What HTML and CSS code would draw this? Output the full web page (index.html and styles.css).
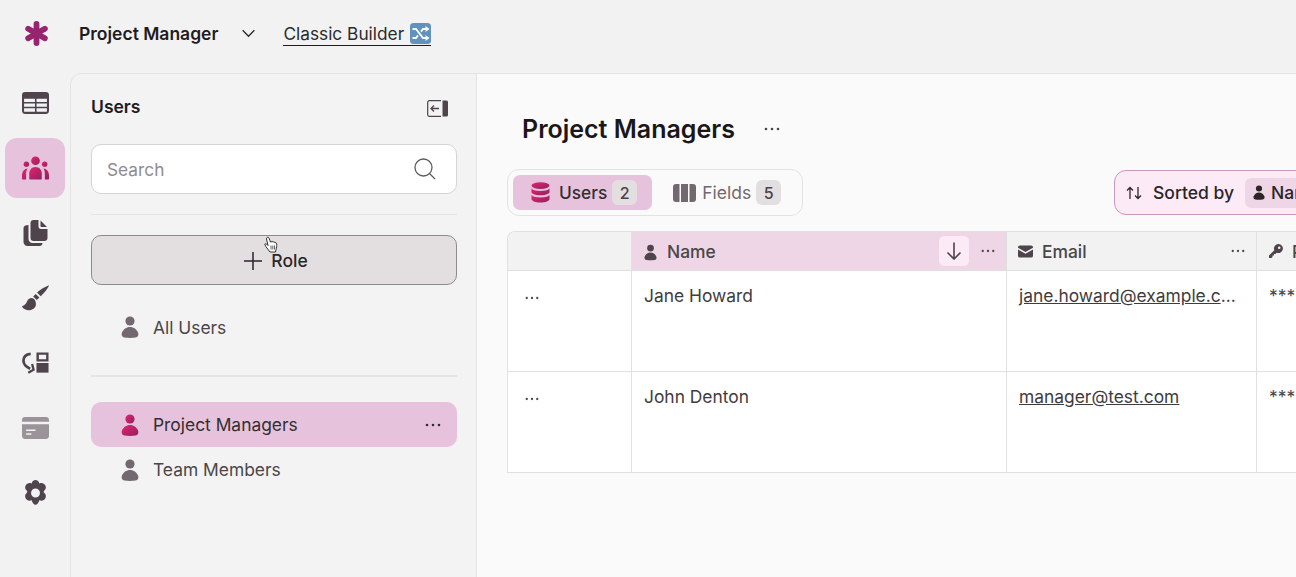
FILE: index.html
```html
<!DOCTYPE html>
<html lang="en">
<head>
    <meta charset="UTF-8">
    <title>Project Manager - Users</title>
    <link rel="stylesheet" href="styles.css">
</head>
<body>

<svg class="defs" width="0" height="0">
    <defs>
        <linearGradient id="pink" x1="0" y1="0" x2="1" y2="1">
            <stop offset="0" stop-color="#e5246f"/>
            <stop offset="1" stop-color="#8f2160"/>
        </linearGradient>
        <symbol id="person" viewBox="0 0 18 22">
            <circle cx="9" cy="5" r="4.6"/>
            <path d="M9 11c-4 0-6.300 2.300-8 5.500C.2 18.500.6 21 3.500 21.500c3.500.5 7.500.5 11 0 2.900-.5 3.300-3 2.500-5C15.300 13.300 13 11 9 11z"/>
        </symbol>
        <symbol id="dots" viewBox="0 0 16 4">
            <circle cx="2" cy="2" r="1.300"/>
            <circle cx="8" cy="2" r="1.300"/>
            <circle cx="14" cy="2" r="1.300"/>
        </symbol>
    </defs>
</svg>

<header class="topbar">
    <svg class="logo" viewBox="0 0 26 26">
        <g fill="#97246f">
            <rect x="10" y="0" width="6" height="26" rx="3"/>
            <rect x="10" y="0" width="6" height="26" rx="3" transform="rotate(60 13 13)"/>
            <rect x="10" y="0" width="6" height="26" rx="3" transform="rotate(120 13 13)"/>
        </g>
    </svg>
    <span class="app-name">Project Manager</span>
    <svg class="chevron" viewBox="0 0 16 10"><path d="M1.500 1.500 8 8l6.500-6.500" fill="none" stroke="#2b2b2b" stroke-width="1.500"/></svg>
    <a class="builder-link">Classic Builder
        <svg class="shuffle" viewBox="0 0 21 21">
            <rect width="21" height="21" rx="3.500" fill="#5f93bd"/>
            <path d="M2.500 6h3.500l7 9h3M2.500 15h3.500l2-2.600M11 8.600 13 6h3" fill="none" stroke="#fff" stroke-width="1.800"/>
            <path d="M15.500 3 19.500 6l-4 3zM15.500 12l4 3-4 3z" fill="#fff"/>
        </svg>
    </a>
</header>

<div class="workspace">
    <nav class="rail">
        <a class="rail-item">
            <svg viewBox="0 0 26 21"><path fill="#4f444c" fill-rule="evenodd" d="M3 0h20a3 3 0 0 1 3 3v15a3 3 0 0 1-3 3H3a3 3 0 0 1-3-3V3a3 3 0 0 1 3-3zM2 6.500V9.500h10.500v-3zm12 0V9.500h10v-3zM2 11v3h10.500v-3zm12 0v3h10v-3zM2 15.500V18.500q0 .5.5.5h10v-3.500zm12 0V19h9.500q.5 0 .5-.5v-3z"/></svg>
        </a>
        <a class="rail-item active">
            <svg viewBox="0 0 28 24" fill="url(#pink)">
                <circle cx="14" cy="4.500" r="4.500"/>
                <circle cx="4.500" cy="8" r="2.800"/>
                <circle cx="23.500" cy="8" r="2.800"/>
                <path d="M14 11c-4 0-6.500 3-6.500 7v5.500c0 .3.200.5.5.5h12c.3 0 .5-.2.5-.5V18c0-4-2.500-7-6.500-7z"/>
                <path d="M5.800 12.500C2.500 12.500 0 15.500 0 20v3.500c0 .3.200.5.5.5h3.800V18c0-2 .5-4 1.500-5.500zM22.200 12.500c3.300 0 5.800 3 5.800 7.500v3.500c0 .3-.2.5-.5.5h-3.800V18c0-2-.5-4-1.500-5.500z"/>
            </svg>
        </a>
        <a class="rail-item">
            <svg viewBox="0 0 24 26" fill="#4f444c">
                <path d="M10 0h5v6.500c0 1.400 1.100 2.500 2.500 2.500H24v9c0 1.700-1.300 3-3 3H10c-1.700 0-3-1.300-3-3V3c0-1.700 1.300-3 3-3z"/>
                <path d="M17 .5 23.500 7H18c-.6 0-1-.4-1-1z"/>
                <path d="M5 5v14c0 2.200 1.800 4 4 4h10c0 1.700-1.300 3-3 3H4c-2.200 0-4-1.800-4-4V8c0-1.700 2-3 5-3z"/>
            </svg>
        </a>
        <a class="rail-item">
            <svg viewBox="0 0 27 26" fill="#4f444c">
                <path d="M26.500.5c-3.500 1.300-8 3.800-11.500 7l3.700 3.700c3.400-3 6.500-7 8.200-10.200.2-.4-.1-.7-.4-.5z"/>
                <path d="M13.700 8.900l-2.500 2.700 3.500 3.500 2.700-2.500z"/>
                <path d="M9.800 13c-2 0-3.800 1.200-4.600 3-.8 1.800-1.400 3.400-3.500 4.400-.9.400-1.700.7-1.700 1.300 2 3 6 4.300 9.500 3 3-1.100 5-3.500 4.300-7-.3-2.500-1.700-4.700-4-4.700z"/>
            </svg>
        </a>
        <a class="rail-item">
            <svg viewBox="0 0 28 22">
                <path d="M9 1.500C4 2 1.500 5 1.500 8.500S4 15 8.500 17" fill="none" stroke="#4f444c" stroke-width="2.800"/>
                <path d="M10.500 12 12 18l-5.500 3" fill="none" stroke="#4f444c" stroke-width="2.400"/>
                <path fill="#4f444c" fill-rule="evenodd" d="M15 0h12.500v9.500H15zM17.500 2.500v4.500h7.500V2.500z"/>
                <rect x="15" y="11" width="12.500" height="10" fill="#4f444c"/>
            </svg>
        </a>
        <a class="rail-item">
            <svg viewBox="0 0 26 21">
                <path fill="#9a9397" d="M3 0h20a3 3 0 0 1 3 3v1.500H0V3a3 3 0 0 1 3-3z"/>
                <path fill="#9a9397" fill-rule="evenodd" d="M0 7h26v11a3 3 0 0 1-3 3H3a3 3 0 0 1-3-3zM4 12v1.500h9V12zm0 3.500V17h5v-1.500z"/>
            </svg>
        </a>
        <a class="rail-item">
            <svg viewBox="0 0 24 25"><path fill="#4f444c" fill-rule="evenodd" d="M12 0c1.600 0 3 1 3.400 2.600l.2.700 1-.3c2-.5 4 .5 4.900 2.200.9 1.700.5 3.800-1 5l-.6.500.1 1.300.5.500c1.500 1.200 1.900 3.300 1 5-.9 1.800-2.900 2.700-4.900 2.200l-1-.3-.2.700c-.4 1.600-1.800 3.800-3.400 3.800s-3-2.200-3.400-3.800l-.2-.7-1 .3c-2 .5-4-.4-4.900-2.200-.9-1.700-.5-3.800 1-5l.5-.5V10.700l-.5-.5c-1.500-1.200-1.900-3.300-1-5C3.400 3.500 5.400 2.500 7.400 3l1 .3.2-.7C9 1 10.400 0 12 0zm0 8.200a4.300 4.300 0 1 0 0 8.600 4.300 4.300 0 0 0 0-8.600z"/></svg>
        </a>
    </nav>

    <aside class="sidebar">
        <div class="sidebar-head">
            <h2>Users</h2>
            <svg class="collapse" viewBox="0 0 21 17">
                <path d="M14 .7H2.200A1.500 1.500 0 0 0 .7 2.200v12.600a1.500 1.500 0 0 0 1.500 1.500H14" fill="none" stroke="#4f444c" stroke-width="1.200"/>
                <path d="M15.500 .5h4a1.500 1.500 0 0 1 1.500 1.500v13a1.500 1.500 0 0 1-1.500 1.500h-4z" fill="#4f444c"/>
                <path d="M12 8.500H4M7 5.500l-3 3 3 3" fill="none" stroke="#4f444c" stroke-width="1.300"/>
            </svg>
        </div>
        <div class="search">
            <span>Search</span>
            <svg viewBox="0 0 22 22"><circle cx="9.500" cy="9.500" r="8.500" fill="none" stroke="#5f5a5d" stroke-width="1.300"/><path d="m15.500 15.500 5.500 5.500" stroke="#5f5a5d" stroke-width="1.300"/></svg>
        </div>
        <hr class="divider thin">
        <button class="add-role">
            <svg viewBox="0 0 18 18"><path d="M9 0v18M0 9h18" stroke="#2b2528" stroke-width="1.500"/></svg>
            Role
        </button>
        <a class="role-row all"><svg><use href="#person"/></svg>All Users</a>
        <hr class="divider thick">
        <a class="role-row selected"><svg><use href="#person"/></svg>Project Managers<svg class="row-dots"><use href="#dots"/></svg></a>
        <a class="role-row"><svg><use href="#person"/></svg>Team Members</a>
    </aside>

    <main class="content">
        <div class="title-row">
            <h1>Project Managers</h1>
            <svg class="title-dots"><use href="#dots"/></svg>
        </div>
        <div class="toolbar">
            <div class="tabs">
                <a class="tab active">
                    <svg viewBox="0 0 19 21" fill="url(#pink)">
                        <ellipse cx="9.500" cy="3.600" rx="9" ry="3.400"/>
                        <path d="M.5 6.500c1.500 1.800 5 2.500 9 2.500s7.500-.7 9-2.500V10c0 1.800-4 3.300-9 3.300S.5 11.800.5 10z"/>
                        <path d="M.5 13c1.500 1.800 5 2.500 9 2.500s7.500-.7 9-2.500v4c0 1.900-4 3.500-9 3.500s-9-1.600-9-3.500z"/>
                    </svg>
                    Users <span class="count">2</span>
                </a>
                <a class="tab">
                    <svg viewBox="0 0 23 18" fill="#74686f">
                        <path d="M3 0h3.500v18H3a3 3 0 0 1-3-3V3a3 3 0 0 1 3-3z"/>
                        <rect x="8" width="7" height="18"/>
                        <path d="M16.500 0H20a3 3 0 0 1 3 3v12a3 3 0 0 1-3 3h-3.500z"/>
                    </svg>
                    Fields <span class="count">5</span>
                </a>
            </div>
            <div class="sort-pill">
                <svg viewBox="0 0 16 14"><path d="M4 13V1.500M1 4.500l3-3 3 3M12 1v11.500M9 9.500l3 3 3-3" fill="none" stroke="#2b2528" stroke-width="1.300"/></svg>
                <span>Sorted by</span>
                <span class="sort-chip"><svg><use href="#person"/></svg>Name</span>
            </div>
        </div>

        <div class="grid">
            <div class="cell head corner"></div>
            <div class="cell head sorted">
                <svg class="field-icon"><use href="#person"/></svg>
                <span class="head-label">Name</span>
                <span class="sort-btn"><svg viewBox="0 0 16 18"><path d="M8 .5v16M1.500 10.500 8 17l6.500-6.500" fill="none" stroke="#4f444c" stroke-width="1.600"/></svg></span>
                <svg class="head-dots"><use href="#dots"/></svg>
            </div>
            <div class="cell head">
                <svg class="field-icon mail" viewBox="0 0 16 13"><path fill="#4f444c" d="M2 0h12a2 2 0 0 1 2 2v.5L8 7 0 2.500V2a2 2 0 0 1 2-2zM0 4.300l8 4.500 8-4.500V11a2 2 0 0 1-2 2H2a2 2 0 0 1-2-2z"/></svg>
                <span class="head-label">Email</span>
                <svg class="head-dots"><use href="#dots"/></svg>
            </div>
            <div class="cell head">
                <svg class="field-icon key" viewBox="0 0 14 14"><path fill="#4f444c" fill-rule="evenodd" d="M9.500 0a4.500 4.500 0 1 1-1.700 8.700L6.500 10H5v1.500H3.500V13l-1 1H0v-2.500l5.300-5.300A4.500 4.500 0 0 1 9.500 0zm.7 2.500a1.300 1.300 0 1 0 0 2.600 1.300 1.300 0 0 0 0-2.600z"/></svg>
                <span class="head-label">Password</span>
            </div>

            <div class="cell row-menu"><svg><use href="#dots"/></svg></div>
            <div class="cell">Jane Howard</div>
            <div class="cell"><a class="mail-link">jane.howard@example.c</a>...</div>
            <div class="cell secret">*****</div>

            <div class="cell row-menu"><svg><use href="#dots"/></svg></div>
            <div class="cell">John Denton</div>
            <div class="cell"><a class="mail-link">manager@test.com</a></div>
            <div class="cell secret">*****</div>
        </div>
    </main>
</div>

<svg class="cursor" viewBox="0 0 14 17">
    <path d="M3 1c.8-.6 1.700-.2 2 .6L6.500 5.500l1.600-.4 1.500.3 1.500.5 1.300.8c.5 1 .5 3-.1 5l-.8 3.800H6L1.800 10 .8 7.800c.2-.7 1-.8 1.700-.3L4 9 2.500 2.500C2.400 2 2.600 1.300 3 1z" fill="#fff" stroke="#1d1d1d" stroke-width=".9"/>
    <path d="M7 9v4M8.800 9v4M10.500 9v4" stroke="#1d1d1d" stroke-width=".7"/>
</svg>

</body>
</html>
```

FILE: styles.css
```css
* {
    box-sizing: border-box;
}
html, body {
    margin: 0;
    height: 577px;
    overflow: hidden;
}
body {
    position: relative;
    font-family: Inter, 'Liberation Sans', sans-serif;
    background: #f2f2f2;
    color: #3c3a3b;
}
.defs {
    position: absolute;
}
h1, h2 {
    margin: 0;
}

/* top bar */
.topbar {
    height: 73px;
    display: flex;
    align-items: center;
    padding-left: 24px;
    padding-bottom: 6px;
}
.logo {
    width: 25px;
    height: 25px;
}
.app-name {
    margin-left: 30px;
    font-size: 17.500px;
    font-weight: 600;
    color: #1f1c1e;
}
.chevron {
    width: 15px;
    height: 9px;
    margin-left: 23px;
}
.builder-link {
    display: flex;
    align-items: center;
    gap: 6px;
    margin-left: 27px;
    font-size: 17.300px;
    color: #2b2b2b;
    border-bottom: 1px solid #1f1c1e;
    line-height: 23px;
    margin-top: 1px;
}
.shuffle {
    width: 21px;
    height: 21px;
}

.workspace {
    display: flex;
    height: 504px;
}

/* left icon rail */
.rail {
    width: 70px;
    flex: none;
    padding-left: 5px;
    display: flex;
    flex-direction: column;
    gap: 5px;
}
.rail-item {
    width: 60px;
    height: 60px;
    border-radius: 12px;
    display: flex;
    align-items: center;
    justify-content: center;
}
.rail-item svg {
    width: 27px;
    height: 26px;
}
.rail-item.active {
    background: #e7c2dc;
}

/* users sidebar */
.sidebar {
    width: 407px;
    flex: none;
    padding: 0 19px 0 20px;
    background: #f3f3f3;
    border-left: 1px solid #e4e4e4;
    border-top: 1px solid #e4e4e4;
    border-right: 1px solid #e4e4e4;
    border-top-left-radius: 12px;
}
.sidebar-head {
    height: 70px;
    display: flex;
    justify-content: space-between;
    align-items: center;
    padding-right: 9px;
    padding-bottom: 6px;
}
.sidebar-head h2 {
    font-size: 17.500px;
    font-weight: 600;
    color: #1f1c1e;
}
.collapse {
    width: 21px;
    height: 17px;
    margin-top: 4px;
}
.search {
    height: 50px;
    background: #fff;
    border: 1px solid #d6d3d5;
    border-radius: 10px;
    display: flex;
    align-items: center;
    justify-content: space-between;
    padding: 1px 20px 0 15px;
    font-size: 17.300px;
    color: #918b8f;
}
.search svg {
    width: 22px;
    height: 22px;
    margin-top: -1px;
}
.divider {
    border: none;
    margin: 0;
    background: #e4e4e4;
}
.divider.thin {
    height: 1px;
    margin: 20px 0;
}
.divider.thick {
    height: 2px;
    margin: 0 0 25px;
}
.add-role {
    width: 100%;
    height: 50px;
    display: flex;
    align-items: center;
    justify-content: center;
    gap: 9px;
    padding: 1px 0 0 4px;
    background: #e3dfe1;
    border: 1px solid #8f8a8d;
    border-radius: 10px;
    font-family: inherit;
    font-size: 17.500px;
    font-weight: 500;
    color: #2b2528;
}
.add-role svg {
    width: 18px;
    height: 18px;
}
.role-row {
    height: 45px;
    display: flex;
    align-items: center;
    padding-left: 30px;
    font-size: 17.400px;
    color: #4a4648;
    border-radius: 10px;
}
.role-row > svg:first-child {
    width: 18px;
    height: 22px;
    margin-right: 14px;
    fill: #74686f;
}
.role-row.all {
    height: 46px;
    margin: 19px 0 25px;
}
.role-row.selected {
    background: #e7c2dc;
    color: #332f31;
}
.role-row.selected > svg:first-child {
    fill: url(#pink);
}
.row-dots {
    width: 16px;
    height: 4px;
    margin-left: auto;
    margin-right: 16px;
    fill: #332c31;
}

/* main panel */
.content {
    flex: 1;
    min-width: 0;
    overflow: hidden;
    background: #fafafa;
    border-top: 1px solid #e4e4e4;
    padding-left: 30px;
}
.title-row {
    height: 95px;
    display: flex;
    align-items: center;
    padding-left: 15px;
    padding-top: 15px;
}
.title-row h1 {
    font-size: 25px;
    font-weight: 600;
    color: #1a1719;
}
.title-dots {
    width: 16px;
    height: 4px;
    margin-left: 29px;
    fill: #4f444c;
}
.toolbar {
    display: flex;
    align-items: flex-start;
    gap: 311px;
    width: 900px;
}
.tabs {
    flex: none;
    width: 296px;
    height: 47px;
    padding: 5px;
    display: flex;
    gap: 6px;
    border: 1px solid #e3e3e3;
    border-radius: 12px;
}
.tab {
    height: 35px;
    display: flex;
    align-items: center;
    padding: 0 15px;
    font-size: 17.500px;
    color: #74686f;
    border-radius: 7px;
}
.tab svg {
    width: 23px;
    height: 18px;
    margin-right: 6px;
}
.tab.active {
    background: #e7c2dc;
    color: #332f31;
    font-weight: 500;
    font-size: 17.300px;
}
.tab.active svg {
    width: 19px;
    height: 21px;
    margin-left: 3px;
    margin-right: 9px;
}
.count {
    width: 25px;
    height: 25px;
    margin-left: 5px;
    border-radius: 6px;
    background: #e3dfe1;
    color: #4a4247;
    font-size: 16px;
    font-weight: 500;
    display: flex;
    align-items: center;
    justify-content: center;
}
.sort-pill {
    flex: none;
    height: 45px;
    margin-top: 1px;
    display: flex;
    align-items: center;
    padding: 0 14px 0 11px;
    font-size: 17.500px;
    font-weight: 500;
    color: #2b2528;
    background: #fcebf6;
    border: 1px solid #c796bd;
    border-radius: 12px;
}
.sort-pill > svg {
    width: 16px;
    height: 14px;
    margin-right: 11px;
}
.sort-chip {
    height: 30px;
    margin-left: 11px;
    padding: 0 8px;
    display: flex;
    align-items: center;
    background: #efd6e6;
    border-radius: 6px;
}
.sort-chip svg {
    width: 12px;
    height: 15px;
    margin-right: 6px;
    fill: #2b2528;
}

/* users table */
.grid {
    margin-top: 15px;
    width: 1000px;
    display: grid;
    grid-template-columns: 124px 375px 250px 250px;
    grid-template-rows: 39px 101px 101px;
    border-top: 1px solid #e0e0e0;
    border-left: 1px solid #e0e0e0;
    border-top-left-radius: 8px;
    font-size: 17.400px;
    color: #3f3c3e;
}
.cell {
    background: #fff;
    border-right: 1px solid #e0e0e0;
    border-bottom: 1px solid #e0e0e0;
    padding: 14px 12px 0;
    line-height: 22px;
}
.head {
    background: #f2f2f2;
    padding: 2px 12px 0;
    display: flex;
    align-items: center;
}
.corner {
    border-top-left-radius: 8px;
}
.sorted {
    background: #efd6e6;
}
.field-icon {
    width: 13px;
    height: 17px;
    margin-right: 10px;
    fill: #4f444c;
    flex: none;
}
.field-icon.mail {
    width: 15px;
    height: 13px;
    margin-top: -2px;
    margin-left: -1px;
    margin-right: 9px;
}
.field-icon.key {
    width: 14px;
    height: 14px;
    margin-right: 9px;
    margin-top: -2px;
}
.head-label {
    color: #4a4648;
    font-weight: 500;
    font-size: 17.400px;
}
.sort-btn {
    width: 30px;
    height: 30px;
    margin-left: auto;
    margin-top: -2px;
    border-radius: 5px;
    background: #fcebf6;
    display: flex;
    align-items: center;
    justify-content: center;
}
.sort-btn svg {
    width: 16px;
    height: 18px;
}
.head-dots {
    width: 14px;
    height: 4px;
    margin-left: auto;
    margin-right: -1px;
    margin-top: -2px;
    fill: #4a4648;
}
.sort-btn + .head-dots {
    margin-left: 12px;
}
.row-menu svg {
    display: block;
    width: 14px;
    height: 4px;
    margin: 11px 0 0 5px;
    fill: #4a4648;
}
.mail-link {
    text-decoration: underline;
}
.secret {
    color: #4a4648;
}

/* mouse pointer in the capture */
.cursor {
    position: absolute;
    left: 264px;
    top: 236px;
    width: 14px;
    height: 18px;
}
```
